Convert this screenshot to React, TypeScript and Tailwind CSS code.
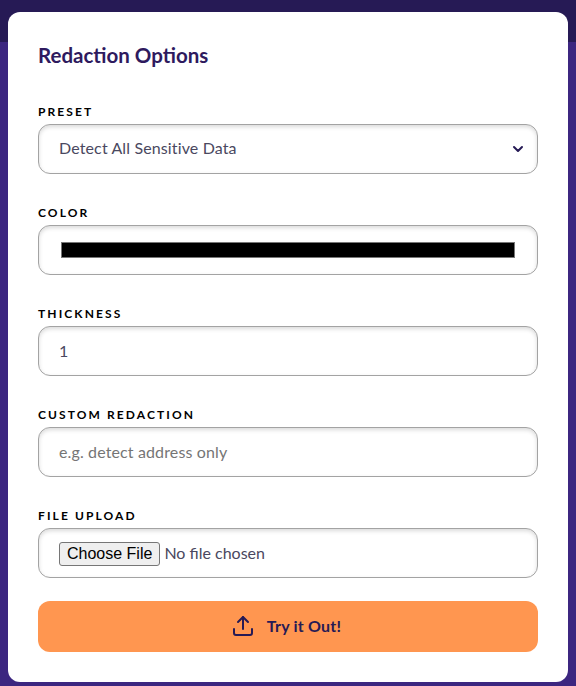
import { Upload, ChevronDown } from "lucide-react";

const labelClass =
  "block text-xs leading-4 font-bold tracking-[2.1px] uppercase text-black mb-1";
const inputClass =
  "block w-full h-[50px] rounded-xl border border-[#a3a3a3] bg-white px-5 text-base text-[#4a4860] shadow-[inset_0_2px_4px_rgba(0,0,0,0.15)] outline-none placeholder:text-[#757575]";

export default function App() {
  return (
    <div className="h-[686px] overflow-hidden bg-[linear-gradient(#261a55_42px,#3c2680_42px)] px-2 pt-3 pb-1 font-['Lato','Noto_Sans',sans-serif]">
      <div className="h-full rounded-xl bg-white px-[30px] pt-[31px]">
        <h2 className="text-[20.5px] leading-6 font-bold text-[#2e1a5e]">
          Redaction Options
        </h2>
        <form className="mt-[37px] flex flex-col gap-[31px]">
          <div>
            <label className={labelClass}>Preset</label>
            <div className="relative">
              <select
                className={`${inputClass} appearance-none pb-0.5 tracking-[0.13px]`}
                defaultValue="all"
              >
                <option value="all">Detect All Sensitive Data</option>
              </select>
              <ChevronDown
                className="absolute top-[17px] right-3 h-4 w-4 text-[#261a55]"
                strokeWidth={3}
              />
            </div>
          </div>
          <div>
            <label className={labelClass}>Color</label>
            <input type="color" defaultValue="#000000" className={`${inputClass} py-3`} />
          </div>
          <div>
            <label className={labelClass}>Thickness</label>
            <input type="number" defaultValue={1} className={`${inputClass} pb-0.5`} />
          </div>
          <div>
            <label className={labelClass}>Custom Redaction</label>
            <input
              type="text"
              placeholder="e.g. detect address only"
              className={`${inputClass} pb-0.5 tracking-[0.13px]`}
            />
          </div>
          <div>
            <label className={labelClass}>File Upload</label>
            <input
              type="file"
              className={`${inputClass} py-3 file:mr-1 file:h-6 file:rounded-[3px] file:border file:border-solid file:border-[#767676] file:bg-[#efefef] file:px-[7px] file:font-['Liberation_Sans',sans-serif] file:text-base file:leading-5 file:text-black`}
            />
          </div>
        </form>
        <button
          type="button"
          className="mt-[23px] flex h-[51px] w-full items-center justify-center gap-3 rounded-xl bg-[#ff9650] pr-1 pb-0.5 text-base font-bold tracking-[0.2px] text-[#261a55]"
        >
          <Upload className="h-6 w-6" strokeWidth={2} />
          Try it Out!
        </button>
      </div>
    </div>
  );
}
